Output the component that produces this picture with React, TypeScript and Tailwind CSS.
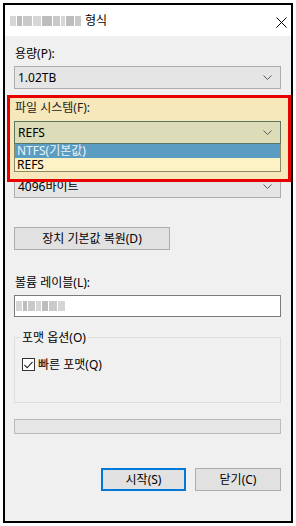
import React from 'react';

const Chevron = () => (
    <svg width="9" height="6" viewBox="0 0 9 6" className="shrink-0">
        <polyline points="0.5,0.5 4.5,4.5 8.5,0.5" fill="none" stroke="#5a5a5a" strokeWidth="1" />
    </svg>
);

const Select = ({ value, className = '' }: { value: string; className?: string }) => (
    <div className={`h-[23px] flex items-center justify-between pl-[3px] pr-[8px] border ${className}`}>
        <span>{value}</span>
        <Chevron />
    </div>
);

// blurred-out names (title + volume label)
const Blur = ({ widths, className = '' }: { widths: number[]; className?: string }) => (
    <div className={`flex items-center gap-[1px] blur-[0.6px] ${className}`}>
        {widths.map((w, i) => (
            <span
                key={i}
                className={`h-[10px] ${i % 3 === 0 ? 'bg-[#d6d6d6]' : i % 3 === 1 ? 'bg-[#bdbdbd]' : 'bg-[#c9c9c9]'}`}
                style={{ width: w }}
            />
        ))}
    </div>
);

const App: React.FC = () => {
    return (
        <div className="w-[296px] h-[526px] bg-white p-[3px] text-[12px] leading-[15px] text-black font-['Noto_Sans','Noto_Sans_CJK_KR',sans-serif]">
            <div className="h-full border-2 border-black flex flex-col">
                {/* Title bar */}
                <div className="h-[31px] bg-white flex items-center pl-[5px] pr-[3px] shrink-0">
                    <Blur widths={[6, 5, 9, 8, 10, 7, 4, 8, 6]} className="mt-[1px]" />
                    <span className="ml-[4px]">형식</span>
                    <svg width="11" height="11" viewBox="0 0 11 11" className="ml-auto mr-[1px] mt-[3px]">
                        <path d="M0.5 0.5 L10.5 10.5 M10.5 0.5 L0.5 10.5" stroke="#000" strokeWidth="1" />
                    </svg>
                </div>

                {/* Body */}
                <div className="relative flex-1 bg-[#f0f0f0] pl-[9px] pr-[10px] flex flex-col">
                    <div className="mt-[10px] pl-[1px]">용량(P):</div>
                    <Select value="1.02TB" className="mt-[5px] bg-[#e5e5e5] border-[#adadad]" />

                    {/* highlighted file system area */}
                    <div className="absolute left-[2px] right-0 top-[59px] h-[87px] bg-[#f6e8ba]" />
                    <div className="relative z-10 mt-[11px] pl-[1px] text-[#222]">파일 시스템(F):</div>
                    <Select value="REFS" className="relative z-10 mt-[6px] bg-[#dcdcb8] border-[#5b7761]" />

                    <Select value="4096바이트" className="mt-[31px] bg-[#e5e5e5] border-[#adadad]" />

                    <div className="absolute z-10 left-[9px] right-[10px] top-[108px] border border-t-0 border-[#8c8a66] flex flex-col">
                        <div className="h-[14px] leading-[13px] pl-[2px] bg-[#5b9cc2] text-[#eaf3f8]">NTFS(기본값)</div>
                        <div className="h-[13px] leading-[13px] pl-[2px] bg-[#fdf1c6]">REFS</div>
                    </div>
                    <div className="absolute z-20 left-[2px] right-0 top-[59px] h-[87px] border-[3px] border-[#e60000] pointer-events-none" />

                    <button className="mt-[29px] w-[156px] h-[23px] bg-[#e1e1e1] border border-[#adadad] flex items-center justify-center">
                        장치 기본값 복원(D)
                    </button>

                    <div className="mt-[25px] pl-[1px]">볼륨 레이블(L):</div>
                    <div className="mt-[5px] h-[22px] bg-white border border-[#7a7a7a] flex items-center pl-[1px]">
                        <Blur widths={[6, 4, 7, 5, 6, 8, 7]} />
                    </div>

                    {/* Format options group */}
                    <div className="relative mt-[20px] h-[66px] border border-[#dcdcdc]">
                        <span className="absolute -top-[8px] left-[5px] px-[2px] bg-[#f0f0f0]">포맷 옵션(O)</span>
                        <div className="flex items-center mt-[19px] ml-[7px] gap-[3px]">
                            <div className="w-[13px] h-[13px] bg-white border border-[#333] flex items-center justify-center">
                                <svg width="9" height="8" viewBox="0 0 9 8">
                                    <polyline points="0.5,4 3.2,6.8 8.5,0.8" fill="none" stroke="#222" strokeWidth="1.1" />
                                </svg>
                            </div>
                            <span>빠른 포맷(Q)</span>
                        </div>
                    </div>

                    {/* Progress */}
                    <div className="mt-[16px] h-[15px] bg-[#e6e6e6] border border-[#bcbcbc]" />

                    <div className="mt-[34px] flex justify-end gap-[9px]">
                        <button className="w-[85px] h-[23px] bg-[#e1e1e1] border-2 border-[#0078d7] flex items-center justify-center">
                            시작(S)
                        </button>
                        <button className="w-[86px] h-[23px] bg-[#e1e1e1] border border-[#adadad] flex items-center justify-center">
                            닫기(C)
                        </button>
                    </div>
                </div>
            </div>
        </div>
    );
};

export default App;
